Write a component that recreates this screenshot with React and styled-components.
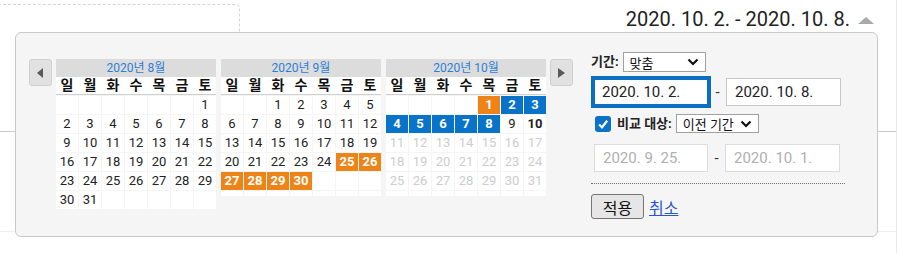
import React from "react"
import styled, { createGlobalStyle } from "styled-components"

const GlobalStyle = createGlobalStyle`
  html, body {
    margin: 0;
    padding: 0;
    background: #fff;
  }
  body {
    font-family: Roboto, "Noto Sans CJK KR", sans-serif;
    color: #222;
  }
`

const Page = styled.div`
  position: relative;
  width: 896px;
  height: 253px;
  border-right: 1px solid #ececec;
  overflow: hidden;
`

const TopBar = styled.div`
  display: flex;
  justify-content: space-between;
  align-items: flex-start;
  height: 32px;
`

const DashedTab = styled.div`
  margin: 4px 0 0 -2px;
  width: 240px;
  height: 80px;
  flex-shrink: 0;
  border: 1px dashed #d6d6d6;
  border-bottom: none;
  border-radius: 0 5px 0 0;
`

const RangeToggle = styled.div`
  display: flex;
  align-items: center;
  gap: 8px;
  margin-top: 7px;
  padding-right: 22px;
  font-size: 20px;
  line-height: 24px;
  color: #222;
`

const UpArrow = styled.span`
  margin-top: 3px;
  width: 0;
  height: 0;
  border-left: 8px solid transparent;
  border-right: 8px solid transparent;
  border-bottom: 7px solid #a9a9a9;
`

const Section = styled.div`
  height: 99px;
  border-bottom: 1px solid ${(p) => p.$line};
`

const Popup = styled.div`
  position: absolute;
  left: 15px;
  top: 32px;
  width: 863px;
  height: 205px;
  box-sizing: border-box;
  display: flex;
  align-items: flex-start;
  padding: 19px 0 0 13px;
  background: #f5f5f5;
  border: 1px solid #c9c9c9;
  border-radius: 6px;
`

const CalendarArea = styled.div`
  display: flex;
  align-items: flex-start;
  gap: 4px;
  margin-top: 7px;
`

const Months = styled.div`
  display: flex;
  gap: 5px;
`

const NavButton = styled.div`
  width: 23px;
  height: 27px;
  box-sizing: border-box;
  display: flex;
  align-items: center;
  justify-content: center;
  background: #e1e1e1;
  border: 1px solid #d0d0d0;
  border-radius: 3px;
`

const NavArrow = styled.span`
  width: 0;
  height: 0;
  border-top: 5px solid transparent;
  border-bottom: 5px solid transparent;
  ${(p) =>
    p.$dir === "left"
      ? "border-right: 6px solid #5a5a5a; margin-right: 2px;"
      : "border-left: 7px solid #5a5a5a; margin-left: 0;"}
`

const MonthBox = styled.div`
  width: 160px;
`

const MonthTitle = styled.div`
  height: 18px;
  background: #dcdcdc;
  color: #2c7ed6;
  font-size: 12px;
  line-height: 18px;
  text-align: center;
`

const DayNames = styled.div`
  display: grid;
  grid-template-columns: repeat(7, 22px);
  column-gap: 1px;
  background: #fff;
  border-bottom: 1px solid #cfcfcf;
`

const DayName = styled.div`
  height: 17px;
  font-size: 14px;
  font-weight: 700;
  line-height: 17px;
  text-align: center;
  color: #111;
`

const DayGrid = styled.div`
  display: grid;
  grid-template-columns: repeat(7, 22px);
  gap: 1px;
  padding-top: 1px;
`

const toneBg = { orange: "#ee8418", blue: "#0873c8" }

const DayCell = styled.div`
  padding: 2px 0 3px;
  font-size: 13px;
  line-height: 13px;
  text-align: center;
  background: ${(p) => toneBg[p.$tone] || "#fff"};
  color: ${(p) => (p.$tone ? "#fff" : p.$off ? "#cdcdcd" : "#222")};
  font-weight: ${(p) => (p.$tone || p.$today ? 700 : 400)};
`

const Controls = styled.div`
  display: flex;
  flex-direction: column;
  margin-left: 18px;
  width: 254px;
`

const Row = styled.div`
  display: flex;
  align-items: center;
  margin-top: ${(p) => p.$top || 0}px;
  margin-left: ${(p) => p.$indent || 0}px;
`

const Label = styled.span`
  font-size: 13px;
  font-weight: 700;
  line-height: 18px;
  color: #222;
  margin-right: 4px;
`

const SelectBox = styled.div`
  width: 83px;
  height: ${(p) => p.$h}px;
  box-sizing: border-box;
  display: flex;
  align-items: center;
  justify-content: space-between;
  padding: 0 6px 0 6px;
  background: #fff;
  border: 1px solid #a0a0a0;
  font-size: 13px;
  color: #111;
`

const DateInput = styled.div`
  width: ${(p) => p.$w}px;
  height: 28px;
  box-sizing: border-box;
  display: flex;
  align-items: center;
  padding-left: ${(p) => (p.$focus ? 7 : 8)}px;
  background: #fff;
  border: ${(p) => (p.$focus ? "2px solid #0a6fc2" : `1px solid ${p.$muted ? "#dcdcdc" : "#c8c8c8"}`)};
  outline: ${(p) => (p.$focus ? "2px solid #0a6fc2" : "none")};
  font-size: 15px;
  color: ${(p) => (p.$muted ? "#b0b0b0" : "#222")};
`

const Dash = styled.span`
  width: 17px;
  text-align: center;
  font-size: 15px;
  color: #333;
`

const CheckBox = styled.span`
  width: 16px;
  height: 16px;
  margin: 0 6px 0 4px;
  border-radius: 3px;
  background: #0b72c7;
  display: flex;
  align-items: center;
  justify-content: center;
`

const Divider = styled.div`
  margin-top: 11px;
  border-top: 1px dotted #6d6d6d;
`

const ApplyButton = styled.button`
  width: 53px;
  height: 25px;
  padding: 0;
  background: #e6e6e6;
  border: 1px solid #767676;
  border-radius: 3px;
  font-family: inherit;
  font-size: 16px;
  color: #111;
`

const CancelLink = styled.a`
  margin-left: 5px;
  font-size: 16px;
  color: #2b55d0;
  text-decoration: underline;
`

const Chevron = () => (
  <svg width="12" height="8" viewBox="0 0 12 8">
    <polyline points="1.5,1.5 6,6 10.5,1.5" fill="none" stroke="#111" strokeWidth="2.2" />
  </svg>
)

const dayNames = ["일", "월", "화", "수", "목", "금", "토"]

const months = [
  { title: "2020년 8월", offset: 6, days: 31, tone: () => null },
  {
    title: "2020년 9월",
    offset: 2,
    days: 30,
    tone: (d) => (d >= 25 ? "orange" : null),
  },
  {
    title: "2020년 10월",
    offset: 4,
    days: 31,
    tone: (d) => (d === 1 ? "orange" : d <= 8 ? "blue" : null),
    today: 10,
    offAfter: 10,
  },
]

const Month = ({ m }) => {
  const cells = []
  for (let i = 0; i < 42; i++) {
    const d = i - m.offset + 1
    if (d < 1 || d > m.days) {
      cells.push(<DayCell key={i} />)
    } else {
      cells.push(
        <DayCell
          key={i}
          $tone={m.tone(d)}
          $today={m.today === d}
          $off={m.offAfter && d > m.offAfter}
        >
          {d}
        </DayCell>
      )
    }
  }
  return (
    <MonthBox>
      <MonthTitle>{m.title}</MonthTitle>
      <DayNames>
        {dayNames.map((n) => (
          <DayName key={n}>{n}</DayName>
        ))}
      </DayNames>
      <DayGrid>{cells}</DayGrid>
    </MonthBox>
  )
}

const App = () => {
  return (
    <>
      <GlobalStyle />
      <Page>
        <TopBar>
          <DashedTab />
          <RangeToggle>
            2020. 10. 2. - 2020. 10. 8.
            <UpArrow />
          </RangeToggle>
        </TopBar>
        <Section $line="#cccccc" />
        <Section $line="#eeeeee" />

        <Popup>
          <CalendarArea>
            <NavButton>
              <NavArrow $dir="left" />
            </NavButton>
            <Months>
              {months.map((m) => (
                <Month key={m.title} m={m} />
              ))}
            </Months>
            <NavButton>
              <NavArrow $dir="right" />
            </NavButton>
          </CalendarArea>

          <Controls>
            <Row>
              <Label>기간:</Label>
              <SelectBox $h={20}>
                맞춤
                <Chevron />
              </SelectBox>
            </Row>
            <Row $top={6} $indent={2}>
              <DateInput $w={116} $focus>2020. 10. 2.</DateInput>
              <Dash>-</Dash>
              <DateInput $w={115}>2020. 10. 8.</DateInput>
            </Row>
            <Row $top={8}>
              <CheckBox>
                <svg width="12" height="12" viewBox="0 0 12 12">
                  <polyline points="2,6.5 5,9.3 10.2,2.8" fill="none" stroke="#fff" strokeWidth="2.2" />
                </svg>
              </CheckBox>
              <Label>비교 대상:</Label>
              <SelectBox $h={19}>
                이전 기간
                <Chevron />
              </SelectBox>
            </Row>
            <Row $top={11} $indent={3}>
              <DateInput $w={114} $muted>2020. 9. 25.</DateInput>
              <Dash>-</Dash>
              <DateInput $w={115} $muted>2020. 10. 1.</DateInput>
            </Row>
            <Divider />
            <Row $top={10}>
              <ApplyButton>적용</ApplyButton>
              <CancelLink>취소</CancelLink>
            </Row>
          </Controls>
        </Popup>
      </Page>
    </>
  )
}

export default App
